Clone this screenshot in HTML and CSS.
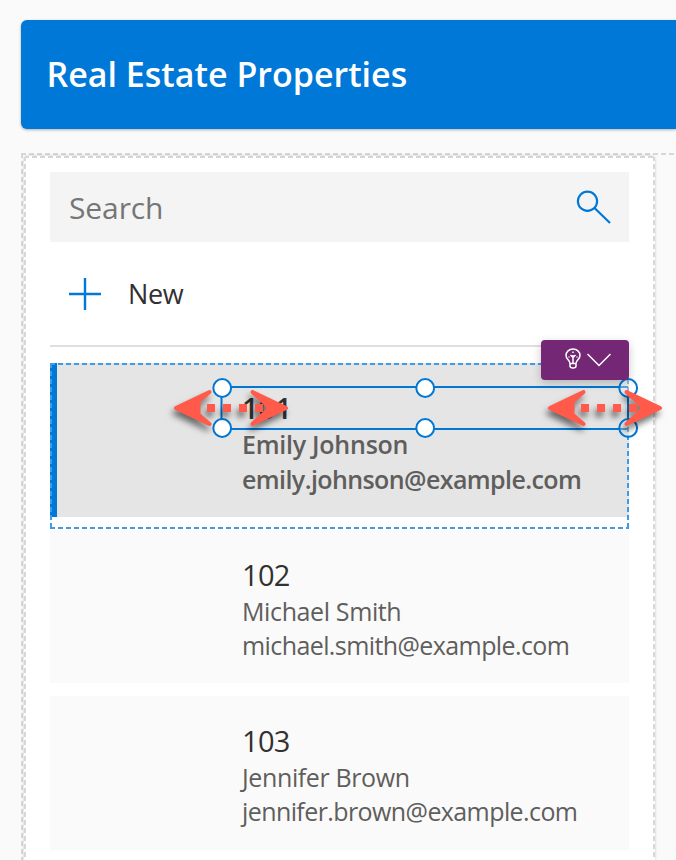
FILE: index.html
```
<!DOCTYPE html>
<html lang="en">
<head>
<meta charset="utf-8">
<title>Real Estate Properties</title>
<link rel="stylesheet" href="styles.css">
</head>
<body>
<svg class="defs" width="0" height="0" aria-hidden="true">
  <defs>
    <g id="arrow">
      <path class="head" d="M3 24 L36.500 8 L25.500 17.500 V30.500 L36.500 40 Z"/>
      <path class="head" d="M113 24 L79.500 8 L94.500 21.500 V26.500 L79.500 40 Z"/>
      <path d="M34 20h8v8h-8zM50 20h8v8h-8zM66 20h8v8h-8zM82 20h8v8h-8z"/>
    </g>
  </defs>
</svg>
<header class="header"><h1>Real Estate Properties</h1></header>
<main class="canvas">
  <section class="panel">
    <div class="search">
      <span>Search</span>
      <svg width="36" height="36" viewBox="0 0 36 36"><circle cx="12.500" cy="12.300" r="9.600"/><path d="M19.500 19 L35 34"/></svg>
    </div>
    <div class="new">
      <svg width="32" height="32" viewBox="0 0 32 32"><path d="M0 16H32M16 0V32"/></svg>
      <span>New</span>
    </div>
    <div class="gallery">
      <article class="item selected">
        <div class="title">101</div>
        <div class="name">Emily Johnson</div>
        <div class="mail">emily.johnson@example.com</div>
        <div class="template"></div>
        <svg class="selection" width="430" height="70" viewBox="0 0 430 70">
          <path d="M418 14H11.500V56H418M418 24V46"/>
          <circle cx="12.200" cy="15" r="8.900"/><circle cx="215.200" cy="15" r="8.900"/><circle class="open" cx="418.200" cy="15" r="8.900"/>
          <circle cx="12.200" cy="55" r="8.900"/><circle cx="215.200" cy="55" r="8.900"/><circle class="open" cx="418.200" cy="55" r="8.900"/>
        </svg>
        <div class="badge">
          <svg width="16" height="21" viewBox="0 0 16 21"><path d="M5 15.500 C5 12 1 11.500 1 7.500 A7 6.500 0 0 1 15 7.500 C15 11.500 11 12 11 15.500 V18 Q11 20 8 20 Q5 20 5 18 Z M5 15.500H11 M8 15V7 M8 9.500L5.500 7 M8 9.500L10.500 7 M3.500 9H4.500 M11.500 9H12.500 M8 3.500V5"/></svg>
          <svg width="24" height="14" viewBox="0 0 24 14"><path d="M.5 1 L12 12.500 L23.500 1"/></svg>
        </div>
        <svg class="arrow left" width="116" height="48" viewBox="0 0 116 48"><use href="#arrow"/></svg>
        <svg class="arrow right" width="116" height="48" viewBox="0 0 116 48"><use href="#arrow"/></svg>
      </article>
      <article class="item">
        <div class="title">102</div>
        <div class="name">Michael Smith</div>
        <div class="mail">michael.smith@example.com</div>
      </article>
      <article class="item">
        <div class="title">103</div>
        <div class="name">Jennifer Brown</div>
        <div class="mail">jennifer.brown@example.com</div>
      </article>
    </div>
  </section>
</main>
</body>
</html>
```
FILE: styles.css
```
* { box-sizing: border-box; }
body {
  margin: 0;
  padding: 20px 0 0 21px;
  height: 860px;
  display: flex;
  flex-direction: column;
  gap: 24px;
  background: #fafafa;
  color: #323130;
  font-family: "Open Sans", "Noto Sans", sans-serif;
}
svg { fill: none; display: block; }
.defs { position: absolute; }
.header {
  height: 109px;
  flex: none;
  display: flex;
  align-items: center;
  padding: 0 0 2px 25.500px;
  background: #0078d7;
  border-radius: 6px 0 0 6px;
  box-shadow: 0 1px 3px rgba(0, 0, 0, .3);
}
h1 {
  margin: 0;
  color: #fff;
  font-size: 34px;
  line-height: 46px;
  font-weight: 600;
  white-space: nowrap;
}
.canvas {
  height: 707px;
  flex: none;
  padding: 3px 0 0 3px;
  background:
    repeating-linear-gradient(90deg, #d9d7d6 0 5px, transparent 5px 8px) 0 0 / 100% 2px no-repeat,
    repeating-linear-gradient(180deg, #d9d7d6 0 5px, transparent 5px 8px) 0 0 / 2px 100% no-repeat;
}
.panel {
  width: 631px;
  height: 704px;
  padding: 16px 26px 0 26px;
  border-radius: 4px 4px 0 0;
  background:
    repeating-linear-gradient(90deg, #d9d7d6 0 5px, transparent 5px 8px) 0 0 / 100% 2px no-repeat,
    repeating-linear-gradient(180deg, #d9d7d6 0 5px, transparent 5px 8px) 0 0 / 2px 100% no-repeat,
    repeating-linear-gradient(180deg, #d9d7d6 0 5px, transparent 5px 8px) 100% 0 / 2px 100% no-repeat,
    #fff;
  box-shadow: 0 0 3px rgba(0, 0, 0, .2);
}
.search {
  width: 579px;
  height: 70px;
  padding: 0 18px 0 19px;
  display: flex;
  align-items: center;
  justify-content: space-between;
  background: #f4f4f4;
  color: #767676;
  font-size: 30px;
  letter-spacing: -.1px;
}
.search svg { stroke: #0078d7; stroke-width: 2.200; }
.new {
  width: 579px;
  height: 105px;
  padding: 0 0 0 19px;
  display: flex;
  align-items: center;
  gap: 27px;
  border-bottom: 2px solid #e1dfdd;
  font-size: 27px;
  letter-spacing: -.4px;
}
.new svg { stroke: #0078d7; stroke-width: 2.400; }
.gallery {
  width: 579px;
  padding-top: 16px;
  display: flex;
  flex-direction: column;
  gap: 13px;
}
.item {
  position: relative;
  height: 153.500px;
  flex: none;
  padding: 24px 0 0 192px;
  background: #fafafa;
  color: #605e5c;
  font-size: 25px;
  line-height: 34px;
  white-space: nowrap;
}
.title { height: 40px; line-height: 41px; font-size: 29px; letter-spacing: -.7px; color: #323130; }
.name { letter-spacing: -.38px; }
.mail { letter-spacing: -.59px; }
.selected { background: #e5e5e5; border-left: 7px solid #0078d7; padding-left: 185px; font-weight: 600; }
.selected .title { letter-spacing: 0; }
.selected .name { letter-spacing: -.25px; height: 35px; }
.template {
  position: absolute;
  left: -7px;
  top: 0;
  width: 579px;
  height: 166px;
  background:
    repeating-linear-gradient(90deg, #3f9be3 0 5px, transparent 5px 8px) 0 0 / 100% 2px no-repeat,
    repeating-linear-gradient(90deg, #3f9be3 0 5px, transparent 5px 8px) 0 100% / 100% 2px no-repeat,
    repeating-linear-gradient(180deg, #3f9be3 0 5px, transparent 5px 8px) 0 0 / 2px 100% no-repeat,
    repeating-linear-gradient(180deg, #3f9be3 0 5px, transparent 5px 8px) 100% 0 / 2px 100% no-repeat;
}
.selection {
  position: absolute;
  left: 153px;
  top: 10px;
  overflow: visible;
  stroke: #0078d4;
  stroke-width: 2;
}
.selection circle { fill: #fff; }
.selection .open { fill: rgba(255, 255, 255, .35); }
.badge {
  position: absolute;
  left: 484px;
  top: -23px;
  width: 88px;
  height: 40px;
  display: flex;
  padding: 8px 0 0 24px;
  gap: 6px;
  border-radius: 4px;
  background: #742774;
  box-shadow: 0 3px 10px rgba(0, 0, 0, .22);
}
.badge svg { stroke: #fff; stroke-width: 1.500; }
.badge svg + svg { margin-top: 5px; }
.arrow { position: absolute; top: 21px; overflow: visible; filter: drop-shadow(-2px 5px 3px rgba(0, 0, 0, .55)); }
.arrow use { fill: #ff5a4a; }
.head { stroke: #ff5a4a; stroke-width: 4; stroke-linejoin: round; }
.left { left: 115.500px; }
.right { left: 490px; }
```
